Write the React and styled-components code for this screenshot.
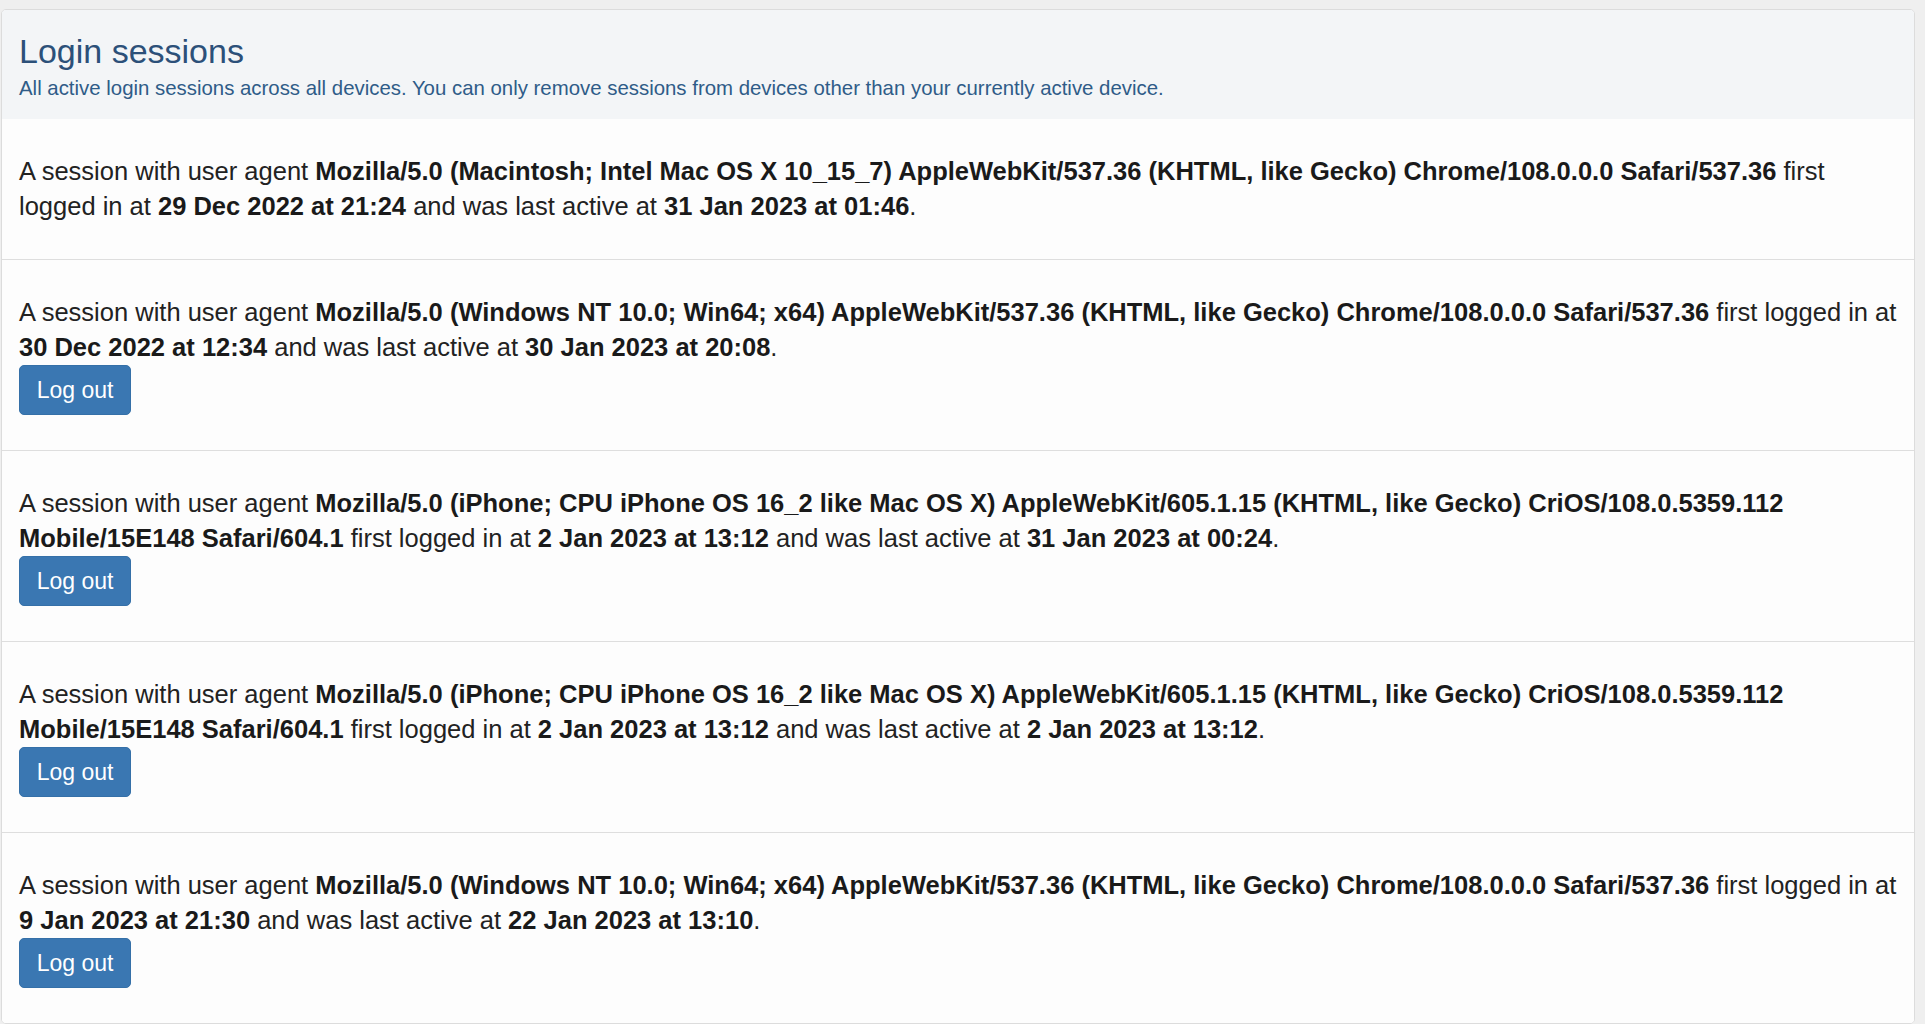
import React from "react";
import styled, { createGlobalStyle } from "styled-components";

const Global = createGlobalStyle`
  html, body {
    margin: 0;
    padding: 0;
    background: #efefef;
    overflow: hidden;
  }
  body {
    font-family: "Liberation Sans", Arial, Helvetica, sans-serif;
    color: #222;
  }
`;

const Page = styled.div`
  padding: 9px 10px 0 1px;
`;

const Panel = styled.section`
  background: #fdfdfd;
  border: 1px solid #dcdcdc;
  border-radius: 5px;
  overflow: hidden;
`;

const Heading = styled.header`
  background: #f3f5f7;
  padding: 23px 17px 17px 17px;
  display: flex;
  flex-direction: column;
  gap: 5px;
`;

const Title = styled.h3`
  margin: 0;
  font-size: 34px;
  line-height: 36px;
  font-weight: 400;
  color: #2c5079;
`;

const Subtitle = styled.p`
  margin: 0;
  font-size: 20.4px;
  line-height: 28px;
  color: #2f5c88;
`;

const List = styled.div`
  display: flex;
  flex-direction: column;
`;

const Row = styled.div`
  padding: 35px 11px 35px 17px;
  border-top: ${(p) => (p.$first ? "none" : "1px solid #dedede")};
  background: #fdfdfd;
`;

const Text = styled.p`
  margin: 0;
  font-size: 25.5px;
  line-height: 35px;
  color: #222;

  strong {
    font-weight: 700;
    color: #1a1a1a;
  }
`;

const Button = styled.button`
  display: inline-flex;
  align-items: center;
  justify-content: center;
  height: 50px;
  width: 112px;
  padding: 0;
  border: 1px solid #3570a8;
  border-radius: 5px;
  background: #3a77b2;
  color: #fff;
  font-family: "Liberation Sans", Arial, Helvetica, sans-serif;
  font-size: 23px;
  cursor: pointer;
`;

const sessions = [
  {
    agent:
      "Mozilla/5.0 (Macintosh; Intel Mac OS X 10_15_7) AppleWebKit/537.36 (KHTML, like Gecko) Chrome/108.0.0.0 Safari/537.36",
    first: "29 Dec 2022 at 21:24",
    last: "31 Jan 2023 at 01:46",
    current: true,
  },
  {
    agent:
      "Mozilla/5.0 (Windows NT 10.0; Win64; x64) AppleWebKit/537.36 (KHTML, like Gecko) Chrome/108.0.0.0 Safari/537.36",
    first: "30 Dec 2022 at 12:34",
    last: "30 Jan 2023 at 20:08",
  },
  {
    agent:
      "Mozilla/5.0 (iPhone; CPU iPhone OS 16_2 like Mac OS X) AppleWebKit/605.1.15 (KHTML, like Gecko) CriOS/108.0.5359.112 Mobile/15E148 Safari/604.1",
    first: "2 Jan 2023 at 13:12",
    last: "31 Jan 2023 at 00:24",
  },
  {
    agent:
      "Mozilla/5.0 (iPhone; CPU iPhone OS 16_2 like Mac OS X) AppleWebKit/605.1.15 (KHTML, like Gecko) CriOS/108.0.5359.112 Mobile/15E148 Safari/604.1",
    first: "2 Jan 2023 at 13:12",
    last: "2 Jan 2023 at 13:12",
  },
  {
    agent:
      "Mozilla/5.0 (Windows NT 10.0; Win64; x64) AppleWebKit/537.36 (KHTML, like Gecko) Chrome/108.0.0.0 Safari/537.36",
    first: "9 Jan 2023 at 21:30",
    last: "22 Jan 2023 at 13:10",
  },
];

export default function App() {
  return (
    <>
      <Global />
      <Page>
        <Panel>
          <Heading>
            <Title>Login sessions</Title>
            <Subtitle>
              All active login sessions across all devices. You can only remove
              sessions from devices other than your currently active device.
            </Subtitle>
          </Heading>
          <List>
            {sessions.map((s, i) => (
              <Row key={i} $first={i === 0}>
                <Text>
                  A session with user agent <strong>{s.agent}</strong> first
                  logged in at <strong>{s.first}</strong> and was last active at{" "}
                  <strong>{s.last}</strong>.
                </Text>
                {!s.current && <Button type="button">Log out</Button>}
              </Row>
            ))}
          </List>
        </Panel>
      </Page>
    </>
  );
}
